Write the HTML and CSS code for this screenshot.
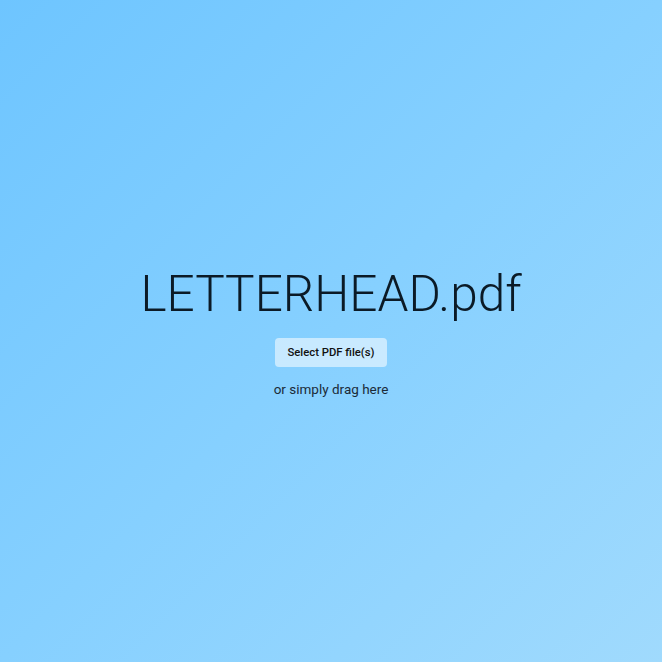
FILE: index.html
```html
<!DOCTYPE html>
<html>
<head>
<meta charset="utf-8">
<link rel="stylesheet" href="styles.css">
</head>
<body>
<main class="drop">
  <div class="stack">
    <h1 class="title">LETTERHEAD.pdf</h1>
    <button class="select">Select PDF file(s)</button>
    <p class="hint">or simply drag here</p>
  </div>
</main>
</body>
</html>
```
FILE: styles.css
```css
html, body {
  margin: 0;
  height: 100%;
}
body {
  font-family: Roboto, "Liberation Sans", sans-serif;
  background: linear-gradient(135deg, #6ec5ff 0%, #86d0ff 50%, #a0dafd 100%);
}
.drop {
  height: 662px;
  display: flex;
  align-items: center;
  justify-content: center;
}
.stack {
  display: flex;
  flex-direction: column;
  align-items: center;
}
.title {
  margin: 0;
  font-weight: 300;
  font-size: 49.5px;
  line-height: 56px;
  color: #0b1a26;
}
.select {
  margin-top: 16px;
  height: 29px;
  padding: 0 12px;
  border: none;
  border-radius: 4px;
  background: rgba(255, 255, 255, 0.55);
  font-family: Roboto, sans-serif;
  font-weight: 500;
  font-size: 11.3px;
  color: #111;
}
.hint {
  margin: 14px 0 0;
  font-size: 13.5px;
  line-height: 16px;
  color: #1b2b38;
}
```
